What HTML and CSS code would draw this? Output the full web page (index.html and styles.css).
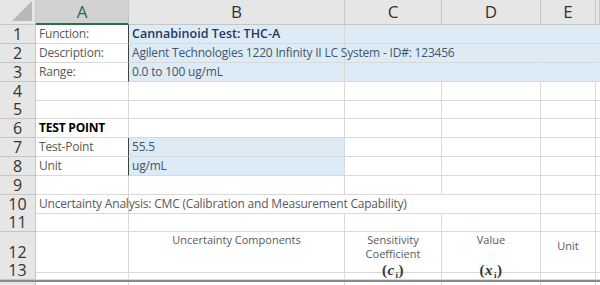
FILE: index.html
```html
<!DOCTYPE html>
<html lang="en">
<head>
    <meta charset="UTF-8">
    <meta name="viewport" content="width=device-width, initial-scale=1.0">
    <title>Uncertainty Budget - THC-A</title>
    <link rel="stylesheet" href="styles.css">
</head>
<body>

    <div class="sheet">
        <div class="row head">
            <div class="corner"><span class="tri"></span></div>
            <div class="col-head active">A</div>
            <div class="col-head">B</div>
            <div class="col-head">C</div>
            <div class="col-head">D</div>
            <div class="col-head">E</div>
            <div class="col-head"></div>
        </div>

        <div class="row">
            <div class="num">1</div>
            <div class="cell label">Function:</div>
            <div class="cell fill edge title">Cannabinoid Test: THC-A</div>
            <div class="cell fill joined"></div>
            <div class="cell fill joined"></div>
            <div class="cell fill joined"></div>
            <div class="cell fill joined"></div>
        </div>
        <div class="row">
            <div class="num">2</div>
            <div class="cell label">Description:</div>
            <div class="cell fill edge value spill">Agilent Technologies 1220 Infinity II LC System - ID#: 123456</div>
            <div class="cell fill joined"></div>
            <div class="cell fill joined"></div>
            <div class="cell fill joined"></div>
            <div class="cell fill joined"></div>
        </div>
        <div class="row">
            <div class="num">3</div>
            <div class="cell label">Range:</div>
            <div class="cell fill edge value">0.0 to 100 ug/mL</div>
            <div class="cell fill joined"></div>
            <div class="cell fill joined"></div>
            <div class="cell fill joined"></div>
            <div class="cell fill joined"></div>
        </div>
        <div class="row short">
            <div class="num">4</div>
            <div class="cell"></div><div class="cell"></div><div class="cell"></div>
            <div class="cell"></div><div class="cell"></div><div class="cell"></div>
        </div>
        <div class="row">
            <div class="num">5</div>
            <div class="cell"></div><div class="cell"></div><div class="cell"></div>
            <div class="cell"></div><div class="cell"></div><div class="cell"></div>
        </div>
        <div class="row">
            <div class="num">6</div>
            <div class="cell heading">TEST POINT</div>
            <div class="cell"></div><div class="cell"></div>
            <div class="cell"></div><div class="cell"></div><div class="cell"></div>
        </div>
        <div class="row">
            <div class="num">7</div>
            <div class="cell label">Test-Point</div>
            <div class="cell fill edge value">55.5</div>
            <div class="cell"></div><div class="cell"></div><div class="cell"></div><div class="cell"></div>
        </div>
        <div class="row">
            <div class="num">8</div>
            <div class="cell label">Unit</div>
            <div class="cell fill edge value">ug/mL</div>
            <div class="cell"></div><div class="cell"></div><div class="cell"></div><div class="cell"></div>
        </div>
        <div class="row">
            <div class="num">9</div>
            <div class="cell"></div><div class="cell"></div><div class="cell"></div>
            <div class="cell"></div><div class="cell"></div><div class="cell"></div>
        </div>
        <div class="row short">
            <div class="num">10</div>
            <div class="cell label spill">Uncertainty Analysis: CMC (Calibration and Measurement Capability)</div>
            <div class="cell joined"></div><div class="cell joined"></div>
            <div class="cell"></div><div class="cell"></div><div class="cell"></div>
        </div>
        <div class="row">
            <div class="num">11</div>
            <div class="cell"></div><div class="cell"></div><div class="cell"></div>
            <div class="cell"></div><div class="cell"></div><div class="cell"></div>
        </div>
        <div class="row tall">
            <div class="num bottom">12</div>
            <div class="cell"></div>
            <div class="cell small top">Uncertainty Components</div>
            <div class="cell small top">Sensitivity<br>Coefficient</div>
            <div class="cell small top">Value</div>
            <div class="cell small middle">Unit</div>
            <div class="cell"></div>
        </div>
        <div class="row last">
            <div class="num">13</div>
            <div class="cell"></div>
            <div class="cell"></div>
            <div class="cell math">(<i>c</i><sub>i</sub>)</div>
            <div class="cell math">(<i>x</i><sub>i</sub>)</div>
            <div class="cell"></div>
            <div class="cell"></div>
        </div>
        <div class="row">
            <div class="num">14</div>
            <div class="cell"></div><div class="cell"></div><div class="cell"></div>
            <div class="cell"></div><div class="cell"></div><div class="cell"></div>
        </div>
    </div>

</body>
</html>
```

FILE: styles.css
```css
body {
    margin: 0;
    width: 600px;
    height: 285px;
    overflow: hidden;
    background: white;
    font-family: 'Open Sans', 'Noto Sans', sans-serif;
}
.sheet {
    width: 600px;
}
.row {
    display: grid;
    grid-template-columns: 36px 93px 216px 97px 99px 55px 4px;
    height: 19px;
}
.row.short {
    height: 18px;
}
.row.tall {
    height: 29px;
}
.row.last {
    border-bottom: 2px solid #8a8a8a;
    height: 19px;
}
.head {
    height: 25px;
}
.corner {
    background: #e6e6e6;
    border-right: 1px solid #c6c6c6;
    border-bottom: 1px solid #c6c6c6;
    position: relative;
}
.tri {
    position: absolute;
    right: 3px;
    bottom: 3px;
    width: 0;
    height: 0;
    border-left: 20px solid transparent;
    border-bottom: 20px solid #b8b8b8;
}
.col-head {
    background: #e6e6e6;
    border-right: 1px solid #c6c6c6;
    border-bottom: 1px solid #c6c6c6;
    color: #333;
    font-size: 17px;
    line-height: 24px;
    text-align: center;
}
.col-head.active {
    background: #d2d2d2;
    color: #217346;
    border-bottom: 2px solid #217346;
    line-height: 23px;
}
.num {
    background: #e6e6e6;
    border-right: 1px solid #c6c6c6;
    border-bottom: 1px solid #c6c6c6;
    color: #333;
    font-size: 16px;
    line-height: 18px;
    text-align: center;
}
.num.bottom {
    line-height: 40px;
}
.cell {
    border-right: 1px solid #d9d9d9;
    border-bottom: 1px solid #d9d9d9;
    font-size: 12px;
    letter-spacing: -0.2px;
    line-height: 18px;
    padding: 0 3px;
    white-space: nowrap;
    color: #404040;
    min-width: 0;
    overflow: hidden;
}
.label {
    color: #595959;
}
.value {
    color: #44546a;
}
.title {
    color: #1f3864;
    font-weight: 600;
    font-size: 12.5px;
    letter-spacing: 0;
}
.heading {
    color: #000;
    font-weight: bold;
}
.spill {
    overflow: visible;
    position: relative;
    z-index: 1;
}
.fill {
    background: #ddebf7;
}
.fill.joined {
    border-right-color: #ddebf7;
}
.joined {
    border-right-color: transparent;
}
.edge {
    border-left: 1px solid #404040;
    margin-left: -1px;
}
.small {
    font-size: 11px;
    letter-spacing: 0;
    line-height: 14px;
    text-align: center;
    color: #595959;
}
.top {
    padding-top: 1px;
}
.middle {
    line-height: 28px;
}
.math {
    font-family: 'Liberation Serif', serif;
    font-weight: bold;
    font-size: 15px;
    letter-spacing: 0.5px;
    text-align: center;
    color: #333;
}
.math sub {
    font-size: 9px;
    vertical-align: -3px;
    margin-left: 1px;
}
```
